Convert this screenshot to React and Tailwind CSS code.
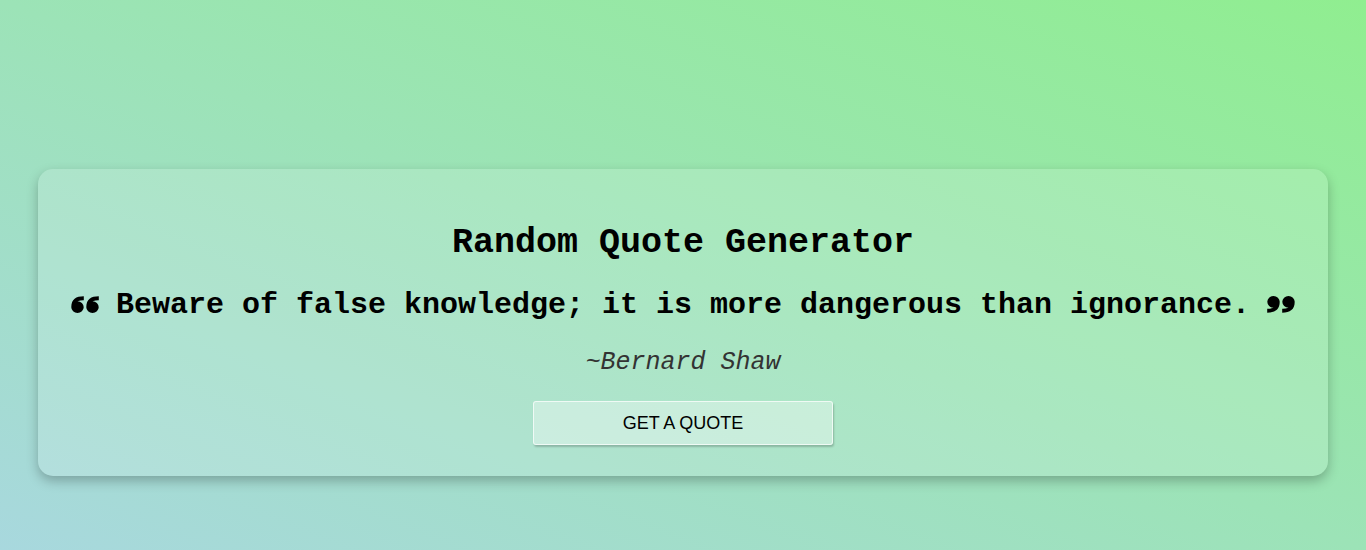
const Glyph6 = ({ x = 0 }) => (
  <path
    transform={`translate(${x},0)`}
    d="M12.8 0.3C5 0.3 0.3 3.5 0.3 11.8A6.2 6.2 0 1 0 6.5 5.6C8.8 4.7 10.8 4.4 12.8 4.5Z"
  />
)

function QuoteMark({ flip }) {
  return (
    <svg
      width="28"
      height="17"
      viewBox="0 0 28 18"
      preserveAspectRatio="none"
      fill="currentColor"
      className={flip ? 'rotate-180 shrink-0' : 'shrink-0'}
    >
      <Glyph6 x={0} />
      <Glyph6 x={15} />
    </svg>
  )
}

export default function App() {
  return (
    <div className="min-h-screen bg-[linear-gradient(to_top_right,#a8d8de,#90ee90)] pt-[169px] px-[38px]">
      <div className="rounded-[15px] bg-white/15 shadow-[0_5px_12px_rgba(0,0,0,0.25)] pt-[54px] pb-[31px] flex flex-col items-center">
        <h1 className="font-['Liberation_Mono',monospace] font-bold text-[35px] leading-[40px] text-black">
          Random Quote Generator
        </h1>

        <div className="mt-[25px] flex items-baseline justify-center gap-[17px] text-black">
          <QuoteMark />
          <p className="font-['Liberation_Mono',monospace] font-bold text-[30px] leading-[34px]">
            Beware of false knowledge; it is more dangerous than ignorance.
          </p>
          <QuoteMark flip />
        </div>

        <p className="mt-[27px] font-['Liberation_Mono',monospace] italic text-[25px] leading-[28px] text-[#333]">
          ~Bernard Shaw
        </p>

        <button className="mt-[24px] w-[300px] h-[44px] rounded-[3px] bg-white/35 border border-white/70 shadow-[1px_2px_2px_rgba(0,0,0,0.2)] font-['Liberation_Sans',Arial,sans-serif] text-[18px] text-black">
          GET A QUOTE
        </button>
      </div>
    </div>
  )
}
